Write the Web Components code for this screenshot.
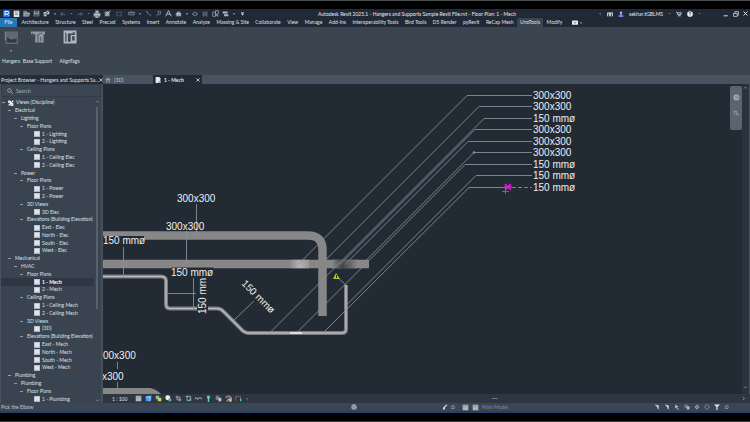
<!DOCTYPE html>
<html lang="en">
<head>
<meta charset="utf-8">
<title>Autodesk Revit 2025.1</title>
<style>
html,body{margin:0;height:100%}
body{background:#000;overflow:hidden;font:5px/8px Lato,"Liberation Sans",sans-serif;color:#dde1e7}
</style>
</head>
<body>
<revit-app></revit-app>
<script>
const define=(name,css,html,after)=>customElements.define(name,class extends HTMLElement{
  constructor(){super();const r=this.attachShadow({mode:'open'});
    r.innerHTML='<style>:host,*{box-sizing:border-box}button{font:inherit;color:inherit;background:none;border:0;padding:0;margin:0;white-space:nowrap}svg{display:block}'+css+'</style>'+(typeof html==='function'?html(this):html);
    if(after)after(r,this);}
});

const glyphs={
  logo:'<rect width="10" height="10" rx="1" fill="#2469e8"/><path d="M3 8V2h3q2 0 2 2T6 6H3m3 0 2 2" fill="none" stroke="#fff" stroke-width="1.4"/>',
  home:'<path d="M1 1h8v9H1z" fill="#dfe3ea"/><path d="M3 3h2M6 3h1M3 6h4" stroke="#39424f"/>',
  open:'<path d="M1 9V2h4l1 2h3v2M1 9l2-4h7L8 9z" fill="#7f8792" stroke="#aab0ba" stroke-width=".8"/>',
  save:'<path d="M1 1h8v8H1z" fill="#9096a0"/><path d="M3 1h4v3H3zM2 6h6v3H2z" fill="#4a525e"/>',
  sync:'<path d="M1 3h4v6H1zM5 1h4v5H5z" fill="#c6cad0"/><path d="M2 7 8 2" stroke="#28303c" stroke-width="1.4"/>',
  undo:'<path d="M4 2 1 5l3 3M1 5h6l2 2" fill="none" stroke="#717985" stroke-width="1.3"/>',
  redo:'<path d="m6 2 3 3-3 3M9 5H3L1 7" fill="none" stroke="#717985" stroke-width="1.3"/>',
  print:'<path d="M3 1h4v3H3zM1 4h8v4H1zM3 7h4v3H3z" fill="#c3c7ce" stroke="#69717d" stroke-width=".7"/>',
  edit:'<path d="M1 2h7v7H1z" fill="#828a95"/><path d="m4 6 5-5M3 4h3M3 7h4" stroke="#d4d7dc"/>',
  dash:'<path d="M1 2h8M1 8h8M1 2v6M9 2v6" stroke="#858c97" stroke-dasharray="2 1"/>',
  ruler:'<path d="M1 3h8v4H1z" fill="none" stroke="#969ca6"/><path d="M3 3v2M5 3v2M7 3v2" stroke="#969ca6"/>',
  angle:'<path d="m2 1 3 5 4 2" fill="none" stroke="#858c97"/><circle cx="3" cy="3" r="1" fill="#858c97"/>',
  tag:'<path d="M3 2h5v4H4L2 9" fill="none" stroke="#858c97"/><path d="M5 3v3" stroke="#858c97"/>',
  type:'<path d="m1 9 4-8 4 8M3 6h4" fill="none" stroke="#b5bac2" stroke-width="1.4"/>',
  cube:'<path d="m1 5 4-4 4 4v4H1z" fill="#7e858f"/><path d="M2 5h6M4 5v4M7 4v5" stroke="#d9dce0"/>',
  section:'<circle cx="5" cy="5" r="3" fill="none" stroke="#a7adb6"/><path d="M0 5h2M8 5h2" stroke="#a7adb6"/>',
  lines:'<path d="M1 2h3M6 2h3M1 5h8M1 8h3M6 8h3" stroke="#b0b5bd" stroke-width="1.2"/>',
  switch:'<path d="M1 3h4v6H1zM5 1h4v5H5z" fill="none" stroke="#a7adb6"/><path d="m5 6 4 3" stroke="#a7adb6" stroke-width="1.5"/>',
  win:'<path d="M1 2h7v3H1zM3 6h6v3H3z" fill="#b3b8c0"/>',
  more:'<path d="M2 2h6v1H2zM2 5h6L5 9z" fill="#fff"/>',
  binoc:'<path d="M1 9V3h3v6M6 9V3h3v6M3 4h4" fill="none" stroke="#e1e4e9" stroke-width="1.5"/>',
  user:'<circle cx="5" cy="3" r="2" fill="#aeb4ff"/><path d="M3 5h4v2h2v3H1V7h2z" fill="#7880ef"/>',
  cart:'<path d="M0 2h2l1 4h5l1-3H3M3 8h5" stroke="#e1e4e9" stroke-width="1.3" fill="none"/>',
  help:'<circle cx="5" cy="5" r="4.7" fill="#f1f3f7"/><path d="M3.5 4q0-2 1.5-2t1.5 1.5Q6.500 4.500 5 5v1M5 7v1" fill="none" stroke="#333c4a" stroke-width="1.2"/>',
  min:'<path d="M1 8h7" stroke="#dce0e6" stroke-width="1.6"/>',
  restore:'<path d="M1 4h6v5H1zM3 4V1h6v6H7" fill="none" stroke="#e1e4e9" stroke-width="1.2"/>',
  close:'<path d="m1 1 8 8M9 1 1 9" stroke="#f1f3f6" stroke-width="1.8"/>',
  sheet:'<path d="M1 0h6l2 2v8H1z" fill="#e8eaef"/><path d="M5 7h4v3H5z" fill="#aab0bb"/>',
  house:'<path d="m0 5 5-4 5 4H8v4H2V5z" fill="#8f97a3"/><path d="M4 5h2v4H4z" fill="#4a5361"/>',
  view:'<path d="M0 0h10v10H0z" fill="#aeb5c0"/><path d="M1 1h8v7H1z" fill="#dfe4ec"/>',
  tree:'<path d="M0 1h5v4H0zM4 5h5v5H4z" fill="#d9dee6"/><path d="m1 9 8-8" stroke="#fff" stroke-width="2"/>',
  find:'<circle cx="4" cy="4" r="3" fill="none" stroke="#c1c6ce"/><path d="m6 6 4 4" stroke="#c1c6ce" stroke-width="1.2"/>',
  panel:'<rect y="1" width="10" height="7" rx="1" fill="#e7e9ed"/><path d="m3 4 2 2 2-2" fill="#343d4a"/>',
  box:'<path d="M1 1h8v8H1z" fill="#aeb3bd"/><path d="M1 3h8" stroke="#848c98"/>',
  blue:'<path d="M1 3 3 1h6v6L7 9H1z" fill="#3d9bef"/><path d="M1 3h6v6M7 3l2-2" fill="none" stroke="#cdeaff"/>',
  sun:'<path d="M1 1h5v5H1z" fill="#92b8a0"/><path d="M4 4h5v5H4z" fill="#cbd068"/>',
  shade:'<circle cx="4" cy="4" r="3.500" fill="#f1f1f1"/><path d="M5 5h4v4H5z" fill="#49b78b"/>',
  crop:'<path d="M3 1v6h6M1 3h6v6" fill="none" stroke="#a5abb5" stroke-width="1.4"/>',
  cropg:'<path d="M3 1v7h5V2H1" fill="none" stroke="#a5b3b8" stroke-width="1.3"/><path d="M6 5h3v3H6z" fill="#35b7a8"/>',
  glass:'<path d="M0 6q1-4 4 0 2-4 6 0" fill="none" stroke="#a2a8b2" stroke-width="1.5"/>',
  bulb:'<path d="M3 1h4v4H6v5H4V5H3z" fill="#58d5be"/>',
  copy:'<path d="M1 1h5v6H1z" fill="#747d8a"/><path d="M5 4h4v5H5z" fill="#c2c7ce"/>',
  multi:'<path d="M1 4q4-5 8 0v5H6V5L2 9" fill="none" stroke="#bda19f" stroke-width="1.5"/><path d="M6 5h3v4H6z" fill="#c5be75"/>',
  link:'<path d="M1 8V2h7v6" fill="none" stroke="#91a39d" stroke-dasharray="2 1"/><path d="M7 5h2v4H7z" fill="#4dcca2"/>',
  pin:'<path d="m1 1 7 1v7L6 8 5 5z" fill="#c3c8d0"/>',
  arrow:'<path d="M2 1v7l2-2 3 4 1-1-3-4h3z" fill="#bcc2ca"/>',
  diamond:'<path d="m1 5 4-4 4 4-4 4z" fill="#aab0ba"/><path d="M3 5h4M5 3v4" stroke="#39434f"/>',
  ring:'<circle cx="5" cy="5" r="3.500" fill="none" stroke="#aab0ba" stroke-width="1.2" stroke-dasharray="2 .6"/>',
  funnel:'<path d="M0 1h10L6 5v5H4V5z" fill="#e1e4e9"/>',
  gear:'<circle cx="5" cy="5" r="4.500" fill="#a7adb7"/><path d="m2 3 3 3 3-4M5 6v4" stroke="#4c5664" fill="none"/>',
  pen:'<path d="m2 6 5-5 2 1-4 4v3H1z" fill="#cfd3da"/>',
  tri:'<path d="m2 4 6 0-3 3z" fill="#cdd2d9"/>',
  up:'<path d="m2 7 3-3 3 3" fill="none" stroke="#9aa3af" stroke-width="1.400"/>',
  down:'<path d="m2 3 3 3 3-3" fill="none" stroke="#9aa3af" stroke-width="1.400"/>',
  left:'<path d="M7 2 4 5l3 3" fill="none" stroke="#aab1bb" stroke-width="1.400"/>',
  right:'<path d="m4 2 3 3-3 3" fill="none" stroke="#aab1bb" stroke-width="1.400"/>',
  hanger:'<path d="M1 1h9v9H1z" fill="#5f6975"/><path d="M1 1v6h3" fill="none" stroke="#7f8894" stroke-width=".8"/><path d="M2 5 5 7l4-1v3H2z" fill="#2f3946"/>',
  support:'<path d="M0 1h10v2H0zM3 3h6v6H3z" fill="#919aa4"/><path d="M1 2v3M5 4v5M4 4l4-2M7 5v3" stroke="#4b5663" stroke-width=".7"/>',
  align:'<path d="M1 1h8v8H1z" fill="#3d4855" stroke="#b0b7c0" stroke-width="1.200"/><path d="M3 1v8M2 2h5M6 4h3v4H6z" stroke="#b0b7c0" fill="none"/>',
  wheel:'<circle cx="5" cy="5" r="4.300" fill="#aeb3ba"/><circle cx="5" cy="5" r="2" fill="none" stroke="#666e78"/><path d="M5 5h4" stroke="#666e78"/>',
  zoomtool:'<path d="M2 2h4v2M2 2v4h2M6 4l3 5M5 7h4" fill="none" stroke="#b9ac93" stroke-width="1.300"/>'
};
define('ui-icon',':host{display:block;flex:none;width:var(--s,7px);height:var(--s,7px)}svg{width:100%;height:100%}',el=>`<svg viewBox="0 0 10 10" aria-hidden="true">${glyphs[el.getAttribute('name')]||''}</svg>`);
const ic=(n,s)=>`<ui-icon name="${n}"${s?` style="--s:${s}px"`:''}></ui-icon>`;
const btn=(n,s)=>`<button aria-label="${n}">${ic(n,s)}</button>`;

define('title-bar',':host{display:grid;grid-template-columns:1fr auto 1fr;align-items:center;height:9px;background:#222936;color:#e9ecf0}.q,.r{display:flex;align-items:center}.q{padding-left:1px}.q button{width:10px;display:flex;justify-content:center}.q .w{width:14px}.q .n{width:7px}.t{white-space:nowrap;margin-left:71px}.r{justify-content:flex-end;gap:5px;padding-right:2px}.wins{display:flex;gap:4px;padding-left:17px}',
`<div class="q">${[['logo',7],['home'],['open'],['save'],['sync'],['tri',4],['undo',6],['tri',3],['redo',6],['tri',3],['print',8],['edit'],['dash',6,'w'],['ruler'],['tri',4],['angle'],['tag'],['type'],['cube',7],['tri',4],['section',6],['lines',6],['switch',7],['win'],['tri',4],['more',5]].map(([n,s,c])=>`<button aria-label="${n}" class="${c||(n==='tri'?'n':'')}">${ic(n,s)}</button>`).join('')}</div>
<div class="t">Autodesk Revit 2025.1 - Hangers and Supports Sample Revit File.rvt - Floor Plan: 1 - Mech</div>
<div class="r">${btn('left',4)}${btn('binoc',6)}${btn('user',6)}<button>sekhar.tGBLMS</button>${btn('tri',3)}${btn('cart',6)}${btn('help',6)}${btn('tri',3)}<div class="wins">${btn('min',6)}${btn('restore',6)}${btn('close',5)}</div></div>`);

define('ribbon-tabs',':host{display:flex;align-items:stretch;height:9px;background:#222936}nav{display:flex;justify-content:space-between;width:75%}button{line-height:9px}.f{background:#2877b3;width:17px;margin-right:-2px;color:#dcefff}.on{background:#3b4451;padding:0 3px;margin:0 -3px;border-radius:2px 2px 0 0}ui-icon{margin:2px 0 0 9px}ui-icon+ui-icon{margin:3px 0 0 1px}',
'<nav><button class="f">File</button>'+['Architecture','Structure','Steel','Precast','Systems','Insert','Annotate','Analyze','Massing &amp; Site','Collaborate','View','Manage','Add-Ins','Interoperability Tools','Bird Tools','D5 Render','pyRevit','ReCap Mesh','UnoTools','Modify'].map(t=>`<button class="${t==='UnoTools'?'on':''}">${t}</button>`).join('')+'</nav>'+ic('panel',6)+ic('tri',4));

define('ribbon-tool',':host{display:block}button{display:flex;flex-direction:column;align-items:center;width:100%}.d{height:4px;margin:5px 0 4px}.l{line-height:8px}','<button><ui-icon></ui-icon><span class="d"></span><span class="l"><slot></slot></span></button>',(r,el)=>{
 r.querySelector('ui-icon').replaceWith(document.createRange().createContextualFragment(ic(el.getAttribute('icon'),14)));
 if(el.hasAttribute('menu'))r.querySelector('.d').innerHTML=ic('tri',4);
});
define('ribbon-panel',':host{display:grid;grid-template-columns:22px 31px 33px;align-items:start;height:48px;background:#3b454f;padding:3px 0 0}',
'<ribbon-tool icon="hanger" menu>Hangers</ribbon-tool><ribbon-tool icon="support">Base Support</ribbon-tool><ribbon-tool icon="align">AlignTags</ribbon-tool>');

define('doc-tabs',':host{display:flex;height:9px;background:#485260;color:#e4e7ec}button{display:flex;align-items:center;gap:3px;padding-left:2px}.a{width:50px;color:#bcc3cc}.b{width:49px;background:#222a35;font-weight:bold}.b ui-icon:last-child{margin-left:auto;margin-right:2px}',
`<button class="a">${ic('house',6)}{3D}</button><button class="b">${ic('sheet',6)}1 - Mech${ic('close',4)}</button>`);

const rows=[[0,'Views (Discipline)'],[1,'Electrical'],[2,'Lighting'],[3,'Floor Plans'],[4,'1 - Lighting'],[4,'2 - Lighting'],[3,'Ceiling Plans'],[4,'1 - Ceiling Elec'],[4,'2 - Ceiling Elec'],[2,'Power'],[3,'Floor Plans'],[4,'1 - Power'],[4,'2 - Power'],[3,'3D Views'],[4,'3D Elec'],[3,'Elevations (Building Elevation)'],[4,'East - Elec'],[4,'North - Elec'],[4,'South - Elec'],[4,'West - Elec'],[1,'Mechanical'],[2,'HVAC'],[3,'Floor Plans'],[4,'1 - Mech',1],[4,'2 - Mech'],[3,'Ceiling Plans'],[4,'1 - Ceiling Mech'],[4,'2 - Ceiling Mech'],[3,'3D Views'],[4,'{3D}'],[3,'Elevations (Building Elevation)'],[4,'East - Mech'],[4,'North - Mech'],[4,'South - Mech'],[4,'West - Mech'],[1,'Plumbing'],[2,'Plumbing'],[3,'Floor Plans'],[4,'1 - Plumbing']];
define('project-browser',':host{display:flex;flex-direction:column;min-height:0;background:#3a4450;border-left:1px solid #4a5461;border-right:2px solid #46505d}header{display:flex;align-items:center;justify-content:space-between;height:9px;background:#252d39;color:#e4e7ec;margin:0 -2px 0 -1px;padding-left:1px;white-space:nowrap}label{display:flex;align-items:center;gap:3px;height:13px;margin-bottom:2px;padding-left:5px;border:1px solid #333d49;background:#3c4652}input{width:60px;font:inherit;color:inherit;background:none;border:0;padding:0;outline:0}input::placeholder{color:#aab1bb;opacity:1}.body{flex:1;min-height:0;display:flex}ul{flex:1;min-width:0;margin:0;padding:0;list-style:none;display:grid;grid-auto-rows:1fr}li{min-height:0;line-height:7px;display:flex;align-items:center;gap:3px;white-space:nowrap;padding-left:calc(var(--d)*6px + 1px)}li.leaf{padding-left:33px;gap:2px}li:first-child{gap:2px}i{width:3px;height:1px;background:#929ba7;margin-right:1px}.on{background:#2e3743;font-weight:bold;color:#fff}.sb{width:6px;display:flex;flex-direction:column;align-items:center;margin-right:1px}.sb b{width:2px;height:202px;max-height:70%;background:#56616e;margin:3px 0 auto}',
`<header><span>Project Browser - Hangers and Supports Sa...</span>${btn('close',4)}</header><label>${ic('find',6)}<input placeholder="Search" aria-label="Search"></label><div class="body"><ul>${rows.map(([d,t,s])=>`<li class="${d===4?'leaf':''}${s?' on':''}" style="--d:${d}">${d===4?ic('view',6):'<i></i>'}${d===0?ic('tree',6):''}<span>${t}</span></li>`).join('')}</ul><div class="sb">${ic('up',5)}<b></b>${ic('down',5)}</div></div>`);

const leader=(y,x,ex)=>`<path d="M532 ${y}H${x}L${ex} ${y+x-ex}"/>`;
const pipe='M100 276.500H161Q166 276.500 166 281V304Q166 308.500 170 308.500H217Q221 308.500 224 312L240 328Q244 333 249 333H342Q346 333 346 329V285';
define('floor-plan',':host{display:block;min-height:0;min-width:0;overflow:hidden;background:#222a34}svg{width:100%;height:100%}text{font:10px "Liberation Sans",Arial,sans-serif;fill:#eceff3}.bg{fill:#222a34}',
`<svg role="img" aria-label="Floor plan 1 - Mech"><defs><linearGradient id="hl"><stop stop-color="#888787"/><stop offset=".5" stop-color="#b4b4b4"/><stop offset="1" stop-color="#999898"/></linearGradient><linearGradient id="dk"><stop stop-color="#8b8a8a"/><stop offset=".4" stop-color="#414448"/><stop offset="1" stop-color="#8b8a8a"/></linearGradient></defs><g transform="translate(-103 -84)">
<path d="M100 235.500H308Q322.500 235.500 322.500 250V316M100 264H369" fill="none" stroke="#888787" stroke-width="8.500"/>
<path d="M290 259.750h19v8.500h-19z" fill="url(#hl)"/><path d="M332 259.750h26v8.500h-26z" fill="url(#dk)"/>
<path d="M100 388h50q7 1 13 8H100z" fill="#888787"/>
<g fill="none" stroke-linejoin="round"><path d="${pipe}" stroke="#777a7d" stroke-width="4"/><path d="${pipe}" stroke="#b9bbbc" stroke-width="1.500"/></g>
<path d="M290 333h12" stroke="#dcdcdc" stroke-width="2"/>
<path class="bg" d="M103 236h41v11h-41zM167 222h37.500v9H167zM171.500 267.500h42v9h-42zM197 278h11v37h-11z"/>
<g fill="none" stroke="#858e99" stroke-width=".9">
${leader(95.5,467,298)}${leader(106.500,479,322)}${leader(118.500,484,270)}${leader(129.500,475,340)}${leader(141.500,468,345)}${leader(152.500,474,363)}${leader(164.500,465,298)}${leader(175.500,476,346)}
<path d="M505 187.500H469L323 333M196.500 204v32M186.500 231v33M123.500 247v30M193.500 278v31M166 293.500h30M254 301l-20 19M117.500 362v7M117.500 382v10M338 278l8 7"/><path d="M512 187.500h20" stroke-dasharray="4 2"/></g>
<circle cx="474" cy="152.500" r="1.300" fill="#58a49c"/>
<path d="m333 279 3-6 4 6z" fill="#b3c622"/><path d="M336.500 275v3" stroke="#222a34"/>
<path d="m505 184 6 6m0-6-6 6M504 187h8" stroke="#d91cd3" stroke-width="1.700"/><path d="M505.500 187v7M502 191.500h7" stroke="#8e7591" stroke-width=".8"/>
${['300x300','300x300','150 mmø','300x300','300x300','300x300','150 mmø','150 mmø','150 mmø'].map((t,i)=>`<text x="533" y="${99+Math.round(i*11.45)}">${t}</text>`).join('')}
<text x="177" y="202">300x300</text><text x="166" y="230">300x300</text><text x="103" y="244">150 mmø</text><text x="171" y="276">150 mmø</text>
<text transform="translate(206 314) rotate(-90)">150 mm</text><text transform="translate(241 284) rotate(45)">150 mmø</text>
<text x="103" y="359">00x300</text><text x="102" y="380">x300</text>
</g></svg>`);

define('nav-bar',':host{display:flex;flex-direction:column;align-items:center;gap:9px;width:12px;height:44px;padding-top:8px;border-radius:2px;background:#5b646f}',btn('wheel',7)+btn('zoomtool',6));
define('scroll-rail',':host{display:flex;flex-direction:column;justify-content:space-between;align-items:center;width:8px;background:#2a323d;padding:1px 0 4px;border-right:1px solid #4a535f}',btn('up',5)+btn('down',5));
define('view-controls',':host{display:flex;align-items:center;gap:3px;height:9px;background:#2e3642;padding:0 4px 0 9px}span{width:20px}i{width:6px;height:1px;background:#6b7480;margin-left:240px}.e{margin-left:auto}',
`<span>1 : 100</span>${['box','blue','sun','shade','crop','cropg','glass','bulb','copy','multi','link'].map(n=>btn(n,7)).join('')}${btn('left',4)}<i></i><button class="e" aria-label="right">${ic('right',5)}</button>`);
define('status-bar',':host{display:grid;grid-template-columns:350fr 304fr 96fr;align-items:center;height:10px;background:#3b4654;border-bottom:2px solid #1f4274;color:#c0c6ce;padding-left:1px}div{display:flex;align-items:center;gap:3px}.g{margin-left:82px}.b{margin-left:4px}.k{gap:4px}.m{color:#7e8895}',
`<span>Pick the Elbow</span><div>${ic('gear',6)}<ui-icon class="g" name="pen" style="--s:6px"></ui-icon>:0<ui-icon class="b" name="box"></ui-icon>${ic('box',7)}<span class="m">Main Model</span></div><div class="k">${['pin','pin','arrow','copy','diamond','ring','funnel'].map(n=>btn(n,6)).join('')}:0</div>`);

define('revit-app',':host{display:flex;flex-direction:column;height:100vh;border-top:1px solid #485050;border-bottom:1px solid #31393c;padding:8px 0}.main{flex:1;min-height:0;display:grid;grid-template-columns:103px 1fr}.right{display:flex;flex-direction:column;min-width:0;min-height:0}.canvas{flex:1;min-height:0;display:grid;grid-template-columns:1fr 8px;position:relative}nav-bar{position:absolute;top:2px;right:8px}',
'<title-bar></title-bar><ribbon-tabs></ribbon-tabs><ribbon-panel></ribbon-panel><div class="main"><project-browser></project-browser><div class="right"><doc-tabs></doc-tabs><div class="canvas"><floor-plan></floor-plan><scroll-rail></scroll-rail><nav-bar></nav-bar></div><view-controls></view-controls></div></div><status-bar></status-bar>');
</script>
</body>
</html>
